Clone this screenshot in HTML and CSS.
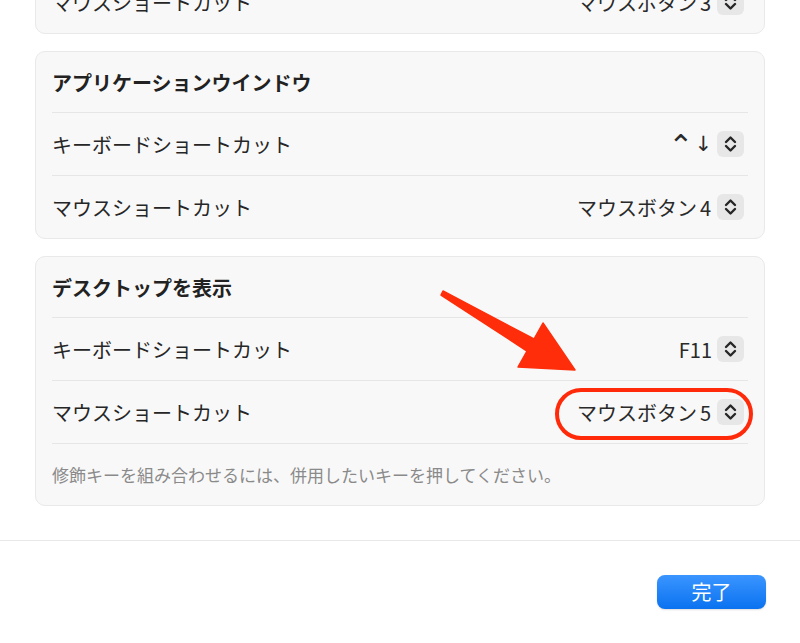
FILE: index.html
```html
<!DOCTYPE html>
<html lang="ja">
  <head>
    <meta charset="UTF-8">
    <meta name="viewport" content="width=device-width,initial-scale=1">
    <title>ショートカット</title>
    <link rel="stylesheet" href="styles.css">
  </head>
  <body>
    <div class="sheet">
      <div class="scroll">
        <section class="card">
          <div class="row">
            <span class="label">マウスショートカット</span>
            <span class="value">マウスボタン<span class="num">3</span></span>
            <span class="stepper"><svg viewBox="0 0 26 26"><path d="M8.5 11 L13 6.5 L17.5 11 M8.5 15 L13 19.5 L17.5 15"/></svg></span>
          </div>
        </section>

        <section class="card">
          <div class="row title">アプリケーションウインドウ</div>
          <div class="row">
            <span class="label">キーボードショートカット</span>
            <span class="value keys"><span class="ctrl">⌃</span><span class="arrow">↓</span></span>
            <span class="stepper"><svg viewBox="0 0 26 26"><path d="M8.5 11 L13 6.5 L17.5 11 M8.5 15 L13 19.5 L17.5 15"/></svg></span>
          </div>
          <div class="row">
            <span class="label">マウスショートカット</span>
            <span class="value">マウスボタン<span class="num">4</span></span>
            <span class="stepper"><svg viewBox="0 0 26 26"><path d="M8.5 11 L13 6.5 L17.5 11 M8.5 15 L13 19.5 L17.5 15"/></svg></span>
          </div>
        </section>

        <section class="card">
          <div class="row title">デスクトップを表示</div>
          <div class="row">
            <span class="label">キーボードショートカット</span>
            <span class="value">F11</span>
            <span class="stepper"><svg viewBox="0 0 26 26"><path d="M8.5 11 L13 6.5 L17.5 11 M8.5 15 L13 19.5 L17.5 15"/></svg></span>
          </div>
          <div class="row">
            <span class="label">マウスショートカット</span>
            <span class="value">マウスボタン<span class="num">5</span></span>
            <span class="stepper"><svg viewBox="0 0 26 26"><path d="M8.5 11 L13 6.5 L17.5 11 M8.5 15 L13 19.5 L17.5 15"/></svg></span>
          </div>
          <div class="row note">修飾キーを組み合わせるには、併用したいキーを押してください。</div>
        </section>
      </div>

      <footer class="footer">
        <button class="done">完了</button>
      </footer>

      <!-- annotation drawn over the screenshot -->
      <svg class="annot" viewBox="0 0 800 643">
        <polygon points="443,291 534,339 543,323 575,370 518,367 527,351 441,295"/>
        <rect x="557" y="390" width="194" height="48" rx="24"/>
      </svg>
    </div>
  </body>
</html>
```

FILE: styles.css
```css
html, body {
  margin: 0;
  height: 100%;
  background-color: #ffffff;
}
body {
  font-family: "Noto Sans CJK JP", "Noto Sans", sans-serif;
  color: #262626;
  overflow: hidden;
}
.sheet {
  position: relative;
  width: 800px;
  height: 643px;
  overflow: hidden;
}
.scroll {
  display: flex;
  flex-direction: column;
  gap: 17px;
  margin-top: -30px;
  padding: 0 35px;
}
.card {
  background-color: #f8f8f8;
  border: 1px solid #e9e9e9;
  border-radius: 10px;
  padding: 0 16px;
}
.row {
  display: flex;
  align-items: center;
  height: 62px;
  font-size: 20px;
  border-top: 1px solid #e6e6e6;
}
.row:first-child {
  border-top: none;
}
.row.title {
  height: 60px;
  font-weight: 700;
  color: #222222;
}
.row.note {
  height: 61px;
  font-size: 17px;
  color: #8a8a8a;
}
.label {
  flex: 1;
}
.value {
  color: #2a2a2a;
}
.value .num {
  margin-left: 3px;
  margin-right: 1px;
}
.value.keys {
  display: flex;
  align-items: center;
  font-family: "DejaVu Sans", "Noto Sans CJK JP", sans-serif;
}
.value.keys .ctrl {
  font-size: 30px;
  line-height: 20px;
  margin-top: 4px;
}
.value.keys .arrow {
  font-size: 21px;
  margin-left: 1px;
}
.stepper {
  display: flex;
  width: 27px;
  height: 26px;
  margin-left: 5px;
  margin-right: 4px;
  border-radius: 6px;
  background-color: #e7e7e7;
}
.stepper svg {
  width: 27px;
  height: 26px;
  fill: none;
  stroke: #262626;
  stroke-width: 2.4;
  stroke-linecap: round;
  stroke-linejoin: round;
}
.footer {
  display: flex;
  justify-content: flex-end;
  margin-top: 34px;
  border-top: 1px solid #e8e8e8;
  padding: 34px 34px 0 0;
}
.done {
  width: 109px;
  height: 34px;
  border: none;
  border-radius: 8px;
  background-image: linear-gradient(180deg, #3b95ff, #0a72f0);
  box-shadow: 0 1px 2px #0002;
  color: white;
  font-family: "Noto Sans CJK JP", sans-serif;
  font-size: 20px;
  padding: 0 0 2px 0;
}
.annot {
  position: absolute;
  top: 0;
  left: 0;
  width: 800px;
  height: 643px;
  pointer-events: none;
}
.annot polygon {
  fill: #ff2d0a;
  stroke: #ff2d0a;
  stroke-width: 1.5;
  stroke-linejoin: round;
}
.annot rect {
  fill: none;
  stroke: #ff2a0a;
  stroke-width: 4;
}
```
